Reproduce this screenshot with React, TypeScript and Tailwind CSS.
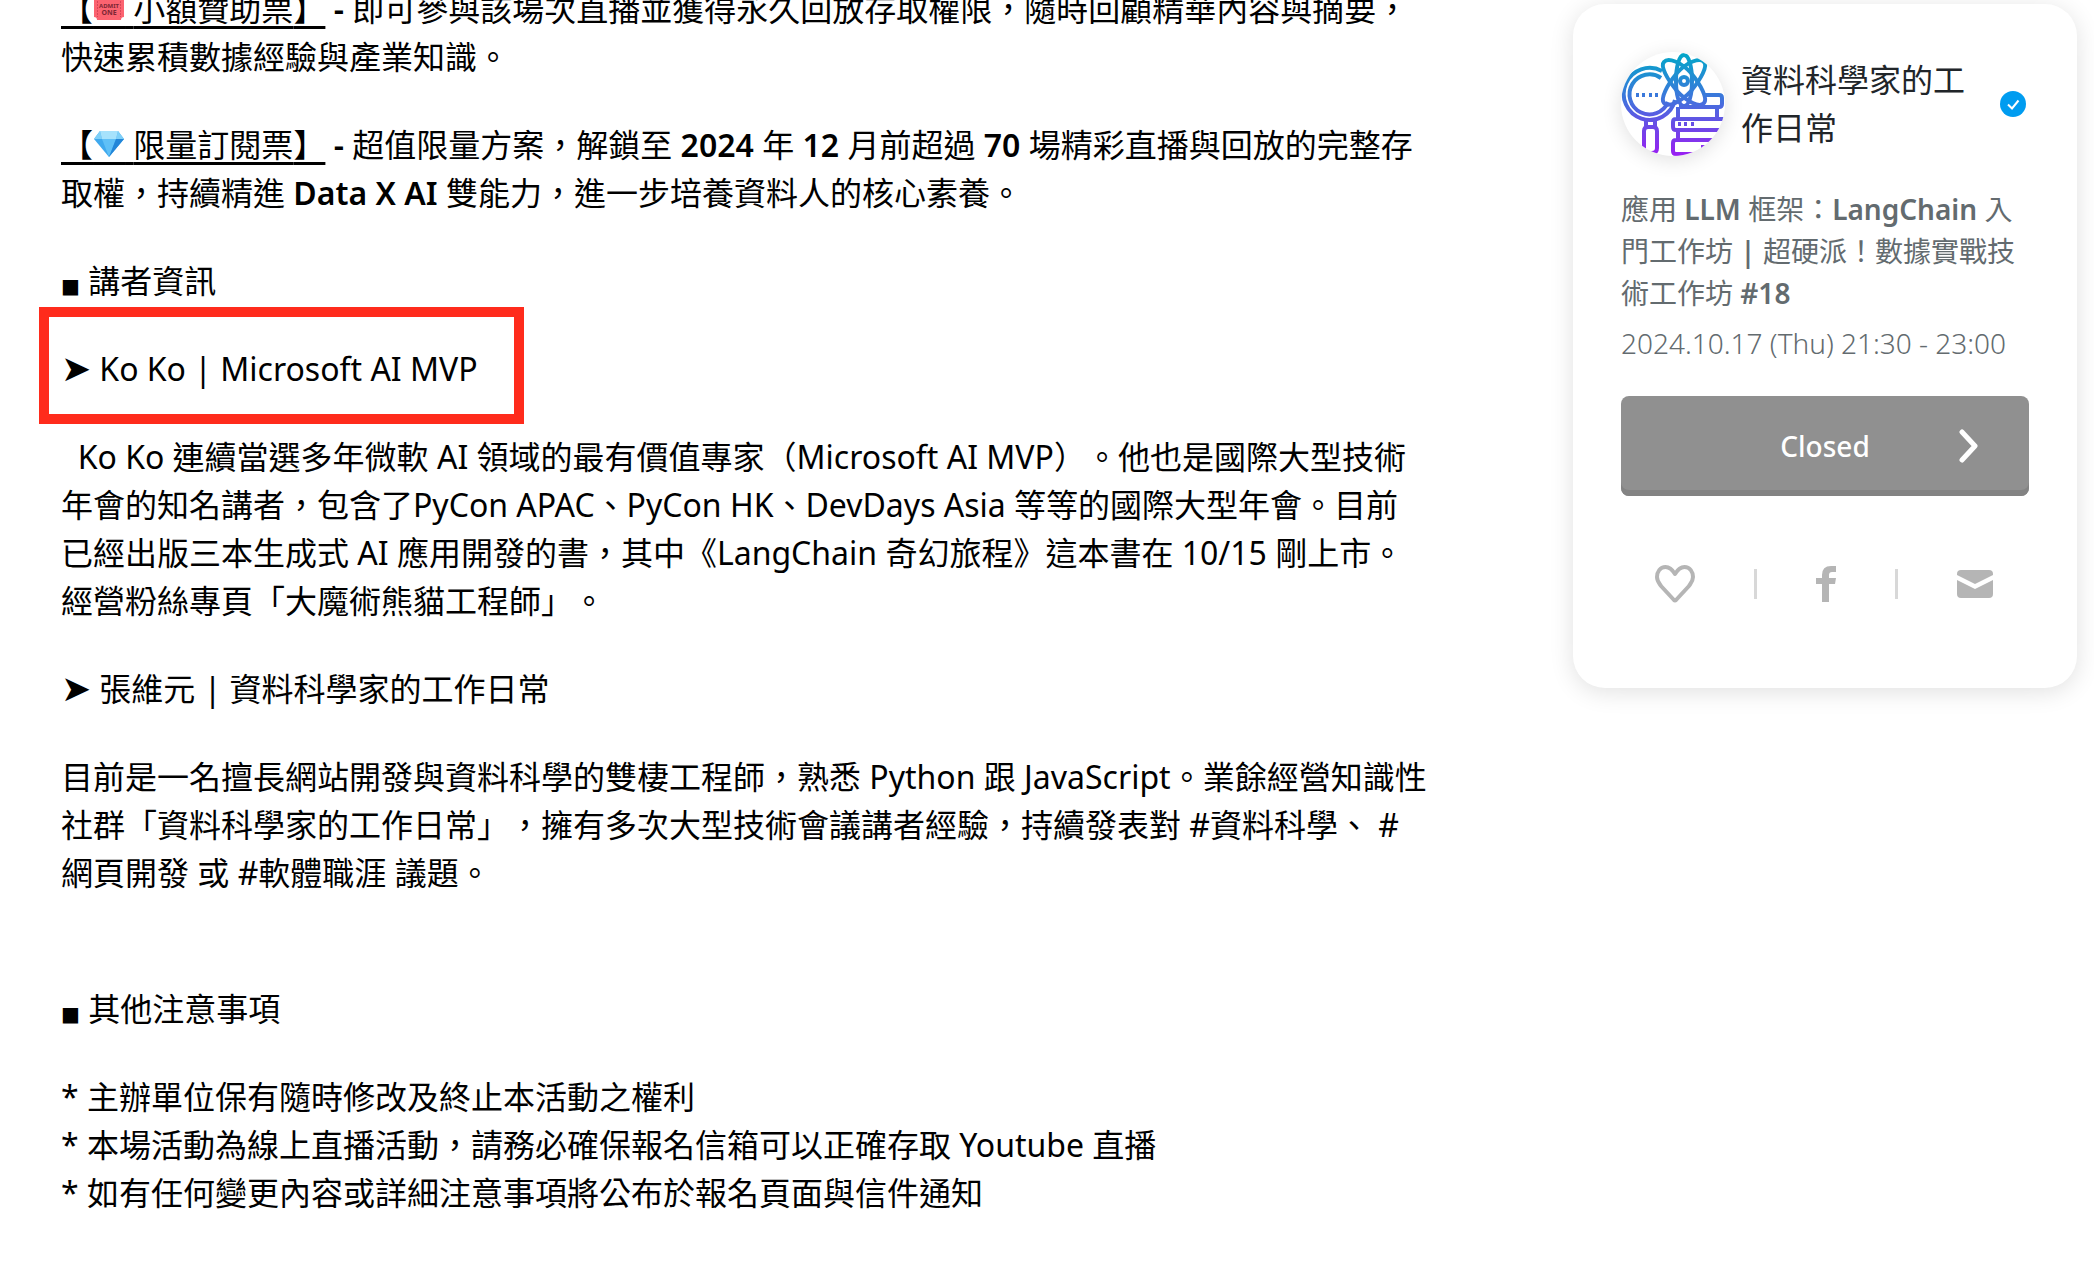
import type { ReactNode } from 'react'

function Ticket() {
  return (
    <svg viewBox="0 0 32 32" className="size-8" aria-hidden="true">
      <path d="M4 1h24a3 3 0 0 0 3 3v22a3 3 0 0 0-3 3H4a3 3 0 0 0-3-3V4a3 3 0 0 0 3-3z" fill="#fb6370" />
      <path d="M4.500 4v22M27.500 4v22" stroke="#d94557" strokeDasharray="2 1" />
      <text x="16" y="17" textAnchor="middle" fontSize="6" fontWeight="700" fill="#7c2634">ADMIT</text>
      <text x="16" y="24" textAnchor="middle" fontSize="7" fontWeight="700" fill="#7c2634">ONE</text>
    </svg>
  )
}

function Diamond() {
  return (
    <svg viewBox="0 0 32 32" className="size-8" aria-hidden="true">
      <path d="M7 4h18l6 8-15 18L1 12z" fill="#3fa9ee" />
      <path d="M7 4 1 12h8zM25 4l6 8h-8z" fill="#7fd0f8" />
      <path d="M7 4h18l-2 8H9z" fill="#a6e2fc" />
      <path d="M9 12h14l-7 18z" fill="#5fc0f7" />
      <path d="M23 12h8L16 30z" fill="#2386d8" />
    </svg>
  )
}

function OrganizerLogo() {
  return (
    <svg viewBox="0 0 104 104" className="size-full" fill="none" stroke="url(#logo)" strokeWidth="4" strokeLinejoin="round" aria-hidden="true">
      <defs>
        <linearGradient id="logo" gradientUnits="userSpaceOnUse" x1="0" y1="0" x2="0" y2="104">
          <stop offset="0" stopColor="#00a9c8" />
          <stop offset="0.45" stopColor="#3f74dc" />
          <stop offset="1" stopColor="#9a1df2" />
        </linearGradient>
      </defs>
      {/* magnifier */}
      <path d="M41 19A26 26 0 1 0 54 48" />
      <path d="M40 26A20 20 0 1 0 47 50" />
      <path d="M25 69v6M34 69v6M23 102V79q0-4 4-4h5q4 0 4 4v17q0 5-5 5h-3" />
      <path d="M15 43h3M21 43h3M28 43h3M34 43h3" />
      {/* books */}
      <path d="M84 43h14q3 0 3 3v6q0 3-3 3H58M57 55v11M96 55v11M104 67H55q-3 0-3 3v5q0 3 3 3h49M57 78v10M104 88H55q-3 0-3 3v8q0 3 3 3h49" />
      <path d="M57 72h3M63 72h3M70 72h3M80 95h4" />
      {/* atom */}
      <path d="M63 3c5 0 8 12 8 26s-3 25-8 25-8-11-8-25S58 3 63 3z" />
      <path d="M43 10c4-5 17 0 27 11 10 12 17 26 13 30-4 5-17-1-27-12-10-12-17-25-13-29z" />
      <path d="M83 10c-4-5-17 0-27 11-10 12-17 26-13 30 4 5 17-1 27-12 10-12 17-25 13-29z" />
      <circle cx="63" cy="29" r="4" />
    </svg>
  )
}

function Paragraph({ children }: { children: ReactNode }) {
  return <p className="mb-10">{children}</p>
}

function Strong({ children }: { children: ReactNode }) {
  return <strong className="font-semibold">{children}</strong>
}

// the icon sits over a full-width space so the underline runs on below it
function PlanName({ icon, name }: { icon: ReactNode; name: string }) {
  return (
    <u className="decoration-[3px] underline-offset-[5px] [text-decoration-skip-ink:none]">
      【<span className="relative">{'\u3000'}<span className="absolute top-1 left-0">{icon}</span></span> {name}】
    </u>
  )
}

function Square() {
  return <span className="font-['DejaVu_Sans',sans-serif] text-[20px] leading-none">■</span>
}

function Arrow() {
  return <span className="text-[36px] leading-none">➤</span>
}

function Description() {
  return (
    <article className="text-[32px] leading-[48px] text-black">
      <Paragraph>
        <PlanName icon={<Ticket />} name="小額贊助票" /> <Strong>-</Strong> 即可參與該場次直播並獲得永久回放存取權限，隨時回顧精華內容與摘要，快速累積數據經驗與產業知識。
      </Paragraph>
      <Paragraph>
        <PlanName icon={<Diamond />} name="限量訂閱票" /> <Strong>-</Strong> 超值限量方案，解鎖至 <Strong>2024</Strong> 年 <Strong>12</Strong> 月前超過 <Strong>70</Strong> 場精彩直播與回放的完整存取權，持續精進 <Strong>Data X AI</Strong> 雙能力，進一步培養資料人的核心素養。
      </Paragraph>
      <Paragraph><Square /> 講者資訊</Paragraph>
      <div className="relative">
        <Paragraph><Arrow /> Ko Ko | Microsoft AI MVP</Paragraph>
        <div className="pointer-events-none absolute -top-[38px] -left-[22px] h-[117px] w-[485px] border-[10px] border-[#ff2b1c]" />
      </div>
      <Paragraph>
        &nbsp; Ko Ko 連續當選多年微軟 AI 領域的最有價值專家（Microsoft AI MVP）。他也是國際大型技術年會的知名講者，包含了PyCon APAC、PyCon HK、DevDays Asia 等等的國際大型年會。目前已經出版三本生成式 AI 應用開發的書，其中《LangChain 奇幻旅程》這本書在 10/15 剛上市。經營粉絲專頁「大魔術熊貓工程師」。
      </Paragraph>
      <Paragraph><Arrow /> 張維元 | 資料科學家的工作日常</Paragraph>
      <Paragraph>
        目前是一名擅長網站開發與資料科學的雙棲工程師，熟悉 Python 跟 JavaScript。業餘經營知識性社群「資料科學家的工作日常」，擁有多次大型技術會議講者經驗，持續發表對 #資料科學、 #網頁開發 或 #軟體職涯 議題。
      </Paragraph>
      <p className="mt-[88px] mb-10"><Square /> 其他注意事項</p>
      <p>* 主辦單位保有隨時修改及終止本活動之權利</p>
      <p>* 本場活動為線上直播活動，請務必確保報名信箱可以正確存取 Youtube 直播</p>
      <p>* 如有任何變更內容或詳細注意事項將公布於報名頁面與信件通知</p>
    </article>
  )
}

function EventCard() {
  return (
    <aside className="mt-1 w-[504px] shrink-0 rounded-[32px] bg-white px-12 pt-12 pb-[84px] shadow-[0_4px_24px_rgba(0,0,0,0.12)]">
      <div className="flex items-center">
        <div className="size-[104px] shrink-0 overflow-hidden rounded-full shadow-[0_4px_20px_rgba(0,0,0,0.12)]">
          <OrganizerLogo />
        </div>
        <h2 className="ml-4 min-w-0 flex-1 pr-6 text-[32px] leading-[48px] text-[#212529]">資料科學家的工作日常</h2>
        <svg viewBox="0 0 26 26" className="mr-[3px] size-[26px] shrink-0" role="img" aria-label="Verified">
          <circle cx="13" cy="13" r="13" fill="#009cf0" />
          <path d="m8 13.500 4 4 6.500-8" fill="none" stroke="#fff" strokeWidth="2" />
        </svg>
      </div>
      <h1 className="mt-8 text-[28px] leading-[42px] text-[#636b6f]">
        應用 <Strong>LLM</Strong> 框架：<Strong>LangChain</Strong> 入門工作坊 <Strong>|</Strong> 超硬派！數據實戰技術工作坊 <Strong>#18</Strong>
      </h1>
      <p className="mt-2 text-[28px] leading-[42px] font-light text-[#636b6f]">2024.10.17 (Thu) 21:30 - 23:00</p>
      <button className="relative mt-8 h-[100px] w-full rounded-lg bg-[#909090] text-[28px] font-medium text-white shadow-[inset_0_-6px_0_#838383]">
        Closed
        <svg viewBox="0 0 20 34" className="absolute top-[33px] right-[50px] h-[34px] w-5" fill="none" stroke="#fff" strokeWidth="5" strokeLinecap="round" strokeLinejoin="round" aria-hidden="true">
          <path d="m3 3 13 14L3 31" />
        </svg>
      </button>
      <div className="mt-[68px] flex h-10 items-center justify-between pr-9 pl-[34px] text-[#b5b5b5]">
        <button aria-label="Like">
          <svg viewBox="0 0 40 38" className="h-[38px] w-10" fill="none" stroke="currentColor" strokeWidth="4" strokeLinejoin="round">
            <path d="M20 9C17 4 14 2 10.500 2 5 2 2 7 2 12c0 4 2 6 4 9l13 14q1 1 2 0l13-14c2-3 4-5 4-9 0-5-3-10-8.500-10C26 2 23 4 20 9z" />
          </svg>
        </button>
        <span className="h-[30px] w-[3px] bg-[#d8d8d8]" />
        <a href="#facebook" aria-label="Facebook">
          <svg viewBox="0 0 20 36" className="h-9 w-5" fill="currentColor">
            <path d="M6 36V18H0v-6h6V9q0-9 9-9h5v6h-4q-3 0-3 3v3h7l-1 6h-6v18z" />
          </svg>
        </a>
        <span className="h-[30px] w-[3px] bg-[#d8d8d8]" />
        <a href="#mail" aria-label="Email">
          <svg viewBox="0 0 36 28" className="h-7 w-9" fill="currentColor">
            <path d="M4 0h28q4 0 4 4v1L18 14 0 5V4q0-4 4-4z" />
            <path d="M0 10l18 9 18-9v14q0 4-4 4H4q-4 0-4-4z" />
          </svg>
        </a>
      </div>
    </aside>
  )
}

export default function App() {
  return (
    <div lang="zh-TW" className="min-h-screen overflow-hidden bg-white font-['Noto_Sans','Noto_Sans_CJK_TC',sans-serif] [text-spacing-trim:space-all]">
      <main className="flex items-start gap-[146px] pr-[17px] pl-[61px]">
        <div className="-mt-[15px] min-w-0 flex-1">
          <Description />
        </div>
        <EventCard />
      </main>
    </div>
  )
}
